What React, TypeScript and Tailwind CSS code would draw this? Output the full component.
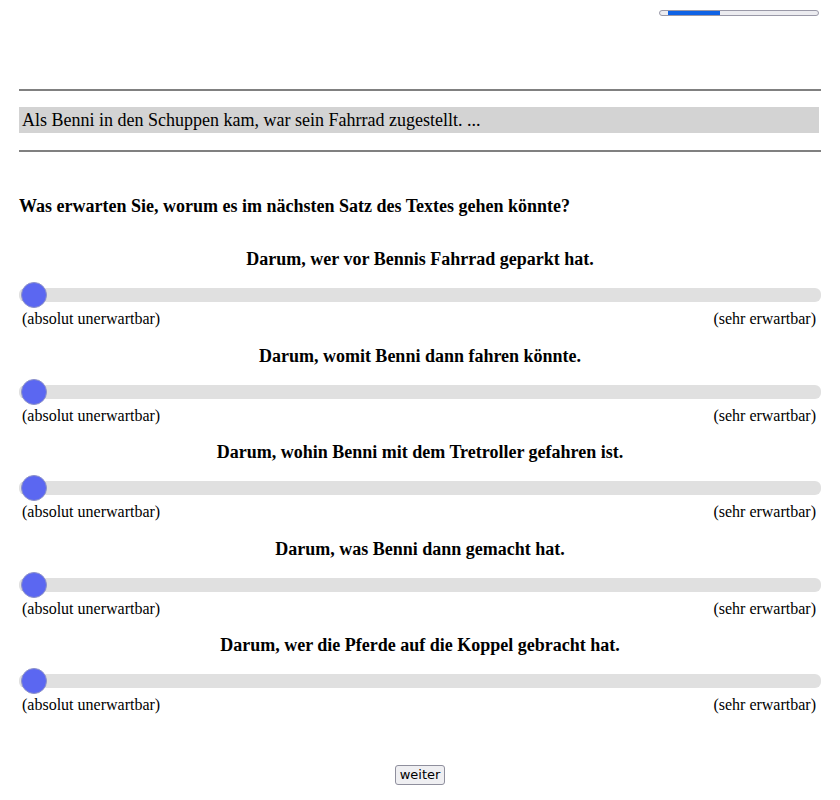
const items = [
  'Darum, wer vor Bennis Fahrrad geparkt hat.',
  'Darum, womit Benni dann fahren könnte.',
  'Darum, wohin Benni mit dem Tretroller gefahren ist.',
  'Darum, was Benni dann gemacht hat.',
  'Darum, wer die Pferde auf die Koppel gebracht hat.',
]

function Rating({ text }: { text: string }) {
  return (
    <div className="mb-[16.5px]">
      <p className="text-center font-bold text-[18px] leading-[22px] mb-[18px]">{text}</p>
      <div className="relative h-[14px] bg-[#e0e0e0] rounded-[6px]">
        <div className="absolute left-[2px] top-[-6px] w-[26px] h-[26px] rounded-full bg-[#5b67f1] border border-[#8d92c8]" />
      </div>
      <div className="flex justify-between text-[16px] leading-[18px] mt-[8px] px-[3px]">
        <span>(absolut unerwartbar)</span>
        <span className="pr-[2px]">(sehr erwartbar)</span>
      </div>
    </div>
  )
}

export default function App() {
  return (
    <div className="w-[840px] h-[800px] bg-white text-black font-['Liberation_Serif',serif] px-[19px]">
      <div className="flex justify-end pt-[10px] pr-[2px]">
        <div className="w-[160px] h-[6px] rounded-full border border-[#9a99a8] bg-[#ececf0] overflow-hidden">
          <div className="ml-[8px] w-[52px] h-full bg-[#0f63e5]" />
        </div>
      </div>

      <div className="mt-[73px] h-[2px] bg-[#808080]" />
      <div className="mt-[16px] h-[26px] bg-[#d3d3d3] w-[800px] pl-[3px] text-[18px] leading-[26px]">
        Als Benni in den Schuppen kam, war sein Fahrrad zugestellt. ...
      </div>
      <div className="mt-[17px] h-[2px] bg-[#808080]" />

      <p className="mt-[43px] font-bold text-[18px] leading-[22px]">
        Was erwarten Sie, worum es im nächsten Satz des Textes gehen könnte?
      </p>

      <div className="mt-[31px]">
        {items.map((t) => (
          <Rating key={t} text={t} />
        ))}
      </div>

      <div className="flex justify-center mt-[51px]">
        <button className="font-['DejaVu_Sans',sans-serif] text-[13px] leading-[16px] px-[4px] py-[1px] bg-[#efeff2] border border-[#8f8f9d] rounded-[3px]">
          weiter
        </button>
      </div>
    </div>
  )
}
